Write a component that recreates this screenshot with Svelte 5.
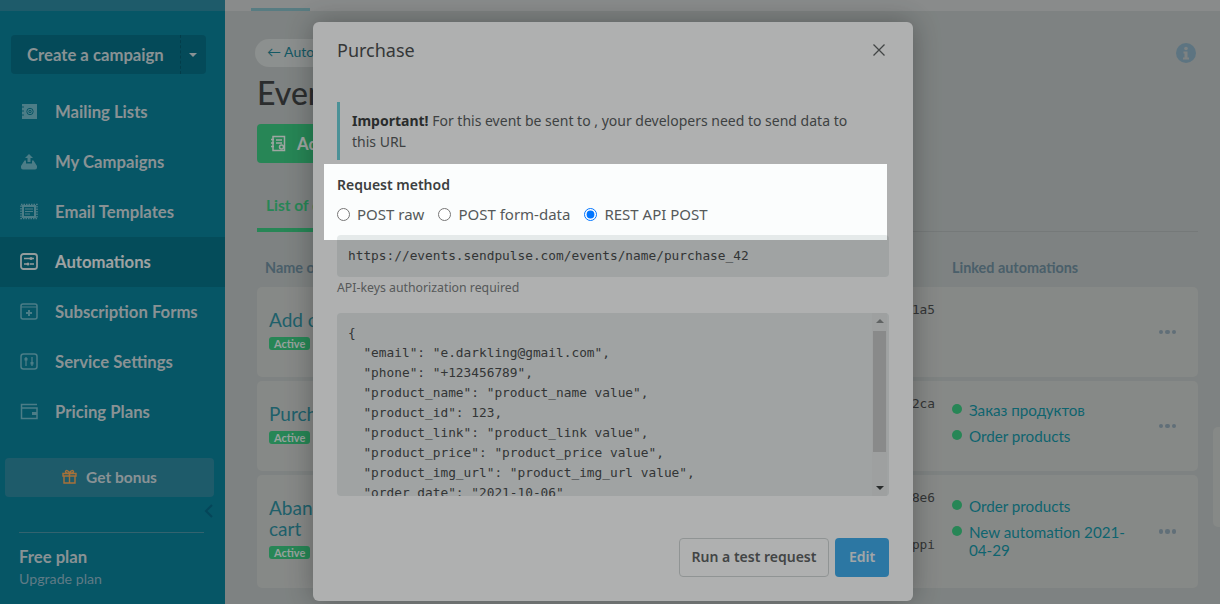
<script>
	const menu = [
		{ label: 'Mailing Lists', icon: 'book' },
		{ label: 'My Campaigns', icon: 'send' },
		{ label: 'Email Templates', icon: 'stamp' },
		{ label: 'Automations', icon: 'flow', active: true },
		{ label: 'Subscription Forms', icon: 'form' },
		{ label: 'Service Settings', icon: 'sliders' },
		{ label: 'Pricing Plans', icon: 'wallet' }
	];

	const events = [
		{ name: 'Add contact', hash: ['d41f1a5'], linked: [] },
		{ name: 'Purchase', hash: ['b09e2ca'], linked: ['Заказ продуктов', 'Order products'] },
		{
			name: 'Abandoned cart',
			hash: ['c7a18e6', 'shoppi'],
			linked: ['Order products', 'New automation 2021-04-29']
		}
	];

	const methods = ['POST raw', 'POST form-data', 'REST API POST'];
	let method = $state('REST API POST');

	const payload = `{
  "email": "e.darkling@gmail.com",
  "phone": "+123456789",
  "product_name": "product_name value",
  "product_id": 123,
  "product_link": "product_link value",
  "product_price": "product_price value",
  "product_img_url": "product_img_url value",
  "order_date": "2021-10-06"
}`;
</script>

<div class="layout">
	<aside class="sidebar">
		<div class="strip"></div>
		<div class="create">
			<span class="create-label">Create a campaign</span>
			<span class="create-caret"></span>
		</div>
		<nav class="menu">
			{#each menu as item}
				<div class="menu-item" class:active={item.active}>
					<svg class="menu-icon" width="18" height="18" viewBox="0 0 18 18">
						{#if item.icon === 'book'}
							<path d="M2 1h15v15H2z" fill="currentColor" />
							<path d="M1 4h3M1 8h3M1 12h3" stroke="#0a7b92" stroke-width="1" />
							<circle cx="10" cy="8.5" r="3.2" fill="none" stroke="#0a7b92" />
							<circle cx="10" cy="8.5" r="1.2" fill="none" stroke="#0a7b92" />
						{:else if item.icon === 'send'}
							<path d="M9 1l4 4h-2.500v4h-3V5H5z" fill="currentColor" />
							<path
								d="M4.500 7.500H6v3h6v-3h1.500L17 13v1.500a2 2 0 0 1-2 2H3a2 2 0 0 1-2-2V13z"
								fill="currentColor"
							/>
						{:else if item.icon === 'stamp'}
							<path d="M2 2h14v13H2z" fill="currentColor" />
							<path
								d="M1 1.500h16v14H1z"
								fill="none"
								stroke="currentColor"
								stroke-width="1.500"
								stroke-dasharray="1.500 1"
							/>
							<path d="M4 4h10v9H4z" fill="#0a7b92" />
							<path d="M5 6h8M5 8.500h8M5 11h5" stroke="currentColor" />
						{:else if item.icon === 'flow'}
							<rect x="1" y="1" width="16" height="15" rx="2.500" fill="none" stroke="currentColor" stroke-width="1.800" />
							<path d="M4 5.500h6M4 11h3M10 11h4M12 5.500h2" stroke="currentColor" stroke-width="1.500" />
							<circle cx="11" cy="5.500" r="1.500" fill="currentColor" />
							<circle cx="8" cy="11" r="1.500" fill="currentColor" />
						{:else if item.icon === 'form'}
							<rect x="1" y="1" width="16" height="15" rx="2" fill="none" stroke="currentColor" stroke-width="1.500" />
							<path d="M1 4h16" stroke="currentColor" />
							<path d="M9 7v6M6 10h6" stroke="currentColor" stroke-width="2" />
						{:else if item.icon === 'sliders'}
							<rect x="1" y="1" width="16" height="15" rx="2.500" fill="none" stroke="currentColor" stroke-width="1.500" />
							<path d="M6 4v9M12 4v9" stroke="currentColor" stroke-width="1.300" />
							<rect x="4.500" y="5" width="3" height="2.500" fill="currentColor" />
							<rect x="10.500" y="9" width="3" height="2.500" fill="currentColor" />
						{:else}
							<path d="M17 1.500H1.500v14H17V5H2" fill="none" stroke="currentColor" stroke-width="1.500" />
							<rect x="12" y="9" width="5" height="3" fill="currentColor" />
						{/if}
					</svg>
					<span>{item.label}</span>
				</div>
			{/each}
		</nav>
		<div class="bonus">
			<svg width="15" height="15" viewBox="0 0 15 15" fill="none" stroke="#f0a352" stroke-width="1.400">
				<path d="M1 4.500h13v2.500H1zM2 7v7h11V7M7.500 4.500V14" />
				<path d="M7.500 4.500C5 4.500 3.500 3.800 3.500 2.500S6.500.800 7.500 4.500C8.500.800 11.500 1.200 11.500 2.500S10 4.500 7.500 4.500z" />
			</svg>
			<span>Get bonus</span>
		</div>
		<div class="collapse">
			<svg width="9" height="14" viewBox="0 0 9 14" fill="none" stroke="currentColor" stroke-width="2">
				<path d="M8 1L2 7l6 6" />
			</svg>
		</div>
		<div class="plan">
			<div class="plan-name">Free plan</div>
			<div class="plan-link">Upgrade plan</div>
		</div>
	</aside>

	<main class="content">
		<div class="strip">
			<span class="strip-tab"></span>
		</div>
		<div class="content-inner">
			<div class="back-row">
				<span class="back">← Automations</span>
				<svg class="info" width="20" height="20" viewBox="0 0 20 20">
					<circle cx="10" cy="10" r="10" fill="currentColor" />
					<circle cx="10" cy="5.500" r="1.800" fill="#b5bbba" />
					<path d="M7.500 8.500h4v6h1.500v2H7v-2h1.500v-4h-1z" fill="#b5bbba" />
				</svg>
			</div>
			<h1>Events</h1>
			<div class="add-btn">
				<svg width="17" height="17" viewBox="0 0 17 17" fill="none" stroke="currentColor" stroke-width="1.500">
					<path d="M3 1.500h11.500v14H3zM1 4.500h3M1 8h3M1 11.500h3M6 5h6M6 8h6" />
					<circle cx="11.500" cy="12" r="2" />
				</svg>
				<span>Add event</span>
			</div>
			<div class="tabs">
				<span class="tab">List of events</span>
			</div>
			<div class="thead">
				<span>Name of event</span>
				<span></span>
				<span>Linked automations</span>
			</div>
			<div class="rows">
				{#each events as ev}
					<div class="row">
						<div class="row-name">
							<div class="row-title">{ev.name}</div>
							<span class="badge">Active</span>
						</div>
						<div class="row-hash">
							{#each ev.hash as h}
								<div>{h}</div>
							{/each}
						</div>
						<div class="row-linked">
							{#each ev.linked as l}
								<div class="linked">
									<span class="dot"></span>
									<span>{l}</span>
								</div>
							{/each}
						</div>
						<div class="more">
							<span></span><span></span><span></span>
						</div>
					</div>
				{/each}
			</div>
		</div>
	</main>

	<div class="side-tab"></div>

	<div class="modal">
		<header class="modal-head">
			<h2>Purchase</h2>
			<svg width="14" height="14" viewBox="0 0 14 14" stroke="#5f6364" stroke-width="1.300" fill="none">
				<path d="M1.500 1.500l11 11M12.500 1.500l-11 11" />
			</svg>
		</header>
		<div class="notice">
			<b>Important!</b> For this event be sent to , your developers need to send data to this URL
		</div>
		<div class="field-label">Request method</div>
		<div class="radios">
			{#each methods as m}
				<label class="radio">
					<input type="radio" name="method" value={m} bind:group={method} />
					<span>{m}</span>
				</label>
			{/each}
		</div>
		<div class="url">https://events.sendpulse.com/events/name/purchase_42</div>
		<div class="hint">API-keys authorization required</div>
		<div class="code">
			<pre>{payload}</pre>
			<div class="scrollbar">
				<span class="arrow up"></span>
				<span class="thumb"></span>
				<span class="arrow down"></span>
			</div>
		</div>
		<footer class="modal-foot">
			<button class="btn-test">Run a test request</button>
			<button class="btn-edit">Edit</button>
		</footer>
		<div class="spotlight"></div>
	</div>
</div>

<style>
	:global(body) {
		overflow: hidden;
	}
	.layout {
		display: flex;
		width: 1220px;
		height: 604px;
		position: relative;
		overflow: hidden;
		background: #b5bbba;
		font-family: Lato, 'Open Sans', sans-serif;
	}

	/* Sidebar */
	.sidebar {
		width: 225px;
		flex: none;
		display: flex;
		flex-direction: column;
		background: #0a7b92;
		color: #c5d1d5;
	}
	.strip {
		height: 11px;
		flex: none;
		background: #2c8399;
		position: relative;
	}
	.create {
		display: flex;
		align-items: center;
		height: 39px;
		margin: 24px 19px 0 11px;
		background: #076b80;
		border-radius: 4px;
		font-size: 16.700px;
		font-weight: 700;
	}
	.create-label {
		flex: 1;
		padding: 0 0 0 16px;
	}
	.create-caret {
		width: 26px;
		height: 100%;
		box-sizing: border-box;
		border-left: 1px dashed #05586a;
		position: relative;
	}
	.create-caret::after {
		content: '';
		position: absolute;
		left: 8px;
		top: 18px;
		border: 4px solid transparent;
		border-top-color: #c5d1d5;
		border-bottom: 0;
	}
	.menu {
		margin-top: 13px;
	}
	.menu-item {
		display: flex;
		align-items: center;
		height: 50px;
		box-sizing: border-box;
		padding: 0 0 1px 20px;
		gap: 17px;
		font-size: 16.700px;
		font-weight: 700;
	}
	.menu-item.active {
		background: #076d82;
		color: #e2e8e8;
	}
	.menu-icon {
		color: #6eb4c2;
	}
	.active .menu-icon {
		color: #d4e0e0;
	}
	.bonus {
		display: flex;
		align-items: center;
		justify-content: center;
		gap: 9px;
		height: 39px;
		box-sizing: border-box;
		padding-bottom: 2px;
		margin: 21px 11px 0 5px;
		background: #2c8399;
		border-radius: 4px;
		font-size: 15.500px;
		font-weight: 700;
	}
	.collapse {
		height: 14px;
		margin-top: 7px;
		padding-left: 204px;
		color: #066580;
		line-height: 0;
	}
	.plan {
		margin: 14px 21px 0 19px;
		border-top: 1px solid #4a8fa0;
		padding-top: 14px;
	}
	.plan-name {
		font-size: 16.700px;
		font-weight: 700;
		line-height: 20px;
	}
	.plan-link {
		font-size: 14.200px;
		line-height: 20px;
		margin-top: 2px;
		color: #88b0c0;
	}

	/* Main page */
	.content {
		flex: 1;
		min-width: 0;
	}
	.content .strip {
		background: #c5c8c8;
	}
	.strip-tab {
		position: absolute;
		left: 26px;
		bottom: 0;
		width: 59px;
		height: 3px;
		background: #7fb2ba;
	}
	.content-inner {
		padding: 28px 22px 0 32px;
	}
	.back-row {
		display: flex;
		align-items: center;
		justify-content: space-between;
		height: 28px;
	}
	.back {
		margin-left: -2px;
		padding: 0 12px;
		height: 28px;
		line-height: 26px;
		border-radius: 14px;
		background: #c9cecd;
		color: #1c8090;
		font-size: 14px;
	}
	.info {
		margin-right: 2px;
		color: #86a7b9;
	}
	h1 {
		margin: 5px 0 0;
		font-size: 32px;
		line-height: 42px;
		font-weight: 500;
		color: #3e4142;
	}
	.add-btn {
		display: inline-flex;
		align-items: center;
		gap: 10px;
		height: 39px;
		margin-top: 10px;
		padding: 0 18px 0 13px;
		background: #38c07b;
		border-radius: 4px;
		color: #e4eee9;
		font-weight: 700;
		font-size: 16.700px;
	}
	.tabs {
		height: 65px;
		margin-top: 4px;
		box-sizing: border-box;
		border-bottom: 1px solid #a8aeae;
		display: flex;
		align-items: flex-end;
	}
	.tab {
		padding: 0 40px 13px 9px;
		border-bottom: 4px solid #38c07b;
		margin-bottom: -1px;
		color: #38c07b;
		font-weight: 700;
		font-size: 15.500px;
		line-height: 19px;
	}
	.thead {
		display: grid;
		grid-template-columns: 1fr 200px 246px;
		height: 55px;
		box-sizing: border-box;
		padding: 26px 0 0 8px;
		font-size: 14.400px;
		font-weight: 700;
		color: #6a8898;
		line-height: 20px;
	}
	.rows {
		display: flex;
		flex-direction: column;
		gap: 4px;
	}
	.row {
		display: grid;
		grid-template-columns: 1fr 120px 187px 20px;
		column-gap: 17px;
		min-height: 90px;
		box-sizing: border-box;
		padding: 0 22px 0 12px;
		background: #c1c4c2;
		border-radius: 5px;
	}
	.row:last-child {
		min-height: 113px;
	}
	.row-name {
		padding-top: 22px;
	}
	.row-title {
		font-size: 19px;
		line-height: 21px;
		color: #2d8a99;
		width: 125px;
	}
	.badge {
		display: inline-block;
		margin-top: 7px;
		padding: 0 5px;
		background: #38c07b;
		border-radius: 3px;
		color: #dbe8e2;
		font-size: 11px;
		font-weight: 700;
		line-height: 13px;
		vertical-align: top;
	}
	.row-hash {
		padding-top: 13px;
		text-align: right;
		font-family: 'DejaVu Sans Mono', monospace;
		font-size: 12.800px;
		line-height: 20px;
		color: #4a4d4e;
	}
	.row-hash div + div {
		margin-top: 27px;
	}
	.row-linked {
		align-self: center;
		display: flex;
		flex-direction: column;
		gap: 8px;
		padding-bottom: 7px;
	}
	.linked {
		display: flex;
		align-items: flex-start;
		gap: 7px;
		font-size: 15.200px;
		line-height: 18px;
		color: #15909f;
	}
	.dot {
		width: 10px;
		height: 10px;
		flex: none;
		margin-top: 3px;
		border-radius: 50%;
		background: #38c07b;
	}
	.more {
		align-self: center;
		display: flex;
		justify-content: flex-end;
		gap: 2px;
	}
	.more span {
		width: 4.500px;
		height: 4.500px;
		border-radius: 50%;
		background: #8a9fac;
	}
	.side-tab {
		position: absolute;
		right: 0;
		top: 427px;
		width: 7px;
		height: 100px;
		background: #c1c4c2;
		border-radius: 5px 0 0 5px;
	}

	/* Modal */
	.modal {
		position: absolute;
		left: 313px;
		top: 22px;
		width: 600px;
		height: 579px;
		box-sizing: border-box;
		padding: 0 24px;
		display: flex;
		flex-direction: column;
		background: #fbfdfd;
		border-radius: 6px;
		box-shadow: 0 0 28px rgba(0, 0, 0, 0.3);
		color: #4a4d4e;
		font-family: 'Noto Sans', sans-serif;
	}
	.modal-head {
		display: flex;
		align-items: center;
		justify-content: space-between;
		height: 55px;
		padding-right: 3px;
	}
	h2 {
		margin: 0;
		font-size: 18px;
		font-weight: 400;
		color: #4c5051;
	}
	.notice {
		margin-top: 25px;
		padding: 8px 30px 0 12px;
		border-left: 3px solid #6cd0d8;
		font-size: 14px;
		line-height: 21px;
		height: 58px;
		box-sizing: border-box;
		color: #5a5e5f;
	}
	.notice b {
		font-weight: 700;
		color: #3c3f40;
	}
	.field-label {
		margin-top: 15px;
		font-size: 14px;
		font-weight: 600;
		line-height: 20px;
		color: #3c3f40;
	}
	.radios {
		display: flex;
		gap: 14px;
		margin-top: 9px;
		height: 20px;
	}
	.radio {
		display: flex;
		align-items: center;
		gap: 7px;
		font-size: 15px;
		line-height: 20px;
		color: #55595a;
	}
	.radio input {
		width: 13px;
		height: 13px;
		margin: 0;
	}
	.url {
		margin-top: 11px;
		height: 42px;
		padding: 0 11px;
		background: #e5eaea;
		border-radius: 4px;
		font-family: 'DejaVu Sans Mono', monospace;
		font-size: 12.800px;
		line-height: 42px;
		color: #4a4d4e;
	}
	.hint {
		margin-top: 2px;
		font-size: 12.300px;
		line-height: 18px;
		color: #7b8081;
	}
	.code {
		position: relative;
		margin-top: 16px;
		height: 183px;
		overflow: hidden;
		background: #e5eaea;
		border-radius: 4px;
	}
	.code pre {
		margin: 0;
		padding: 10.400px 11px;
		font-family: 'DejaVu Sans Mono', monospace;
		font-size: 12.800px;
		line-height: 20px;
		color: #4a4d4e;
	}
	.scrollbar {
		position: absolute;
		top: 0;
		right: 2px;
		bottom: 0;
		width: 15px;
		display: flex;
		flex-direction: column;
		align-items: center;
		background: #e2e6e6;
	}
	.arrow {
		flex: none;
		width: 0;
		height: 0;
		border: 4px solid transparent;
		box-sizing: content-box;
	}
	.arrow.up {
		margin-top: 6px;
		margin-bottom: 8px;
		border-top: 0;
		border-bottom-color: #8a8e8e;
	}
	.arrow.down {
		margin-top: auto;
		margin-bottom: 6px;
		border-bottom: 0;
		border-top-color: #3c3f40;
	}
	.thumb {
		width: 13px;
		height: 121px;
		background: #c4c6c6;
	}
	.modal-foot {
		display: flex;
		justify-content: flex-end;
		gap: 6px;
		margin-top: 42px;
	}
	.modal-foot button {
		height: 39px;
		border-radius: 4px;
		font-family: inherit;
		font-size: 14px;
		font-weight: 600;
		padding: 0 0 2px;
	}
	.btn-test {
		width: 150px;
		background: transparent;
		border: 1px solid #cfd4d4;
		color: #5f6364;
	}
	.btn-edit {
		width: 54px;
		background: #40abea;
		border: 0;
		color: #e8eef0;
	}
	.spotlight {
		position: absolute;
		left: 11px;
		top: 142px;
		width: 563px;
		height: 76px;
		box-shadow: 0 0 0 2000px rgba(0, 0, 0, 0.3);
		pointer-events: none;
	}
</style>
